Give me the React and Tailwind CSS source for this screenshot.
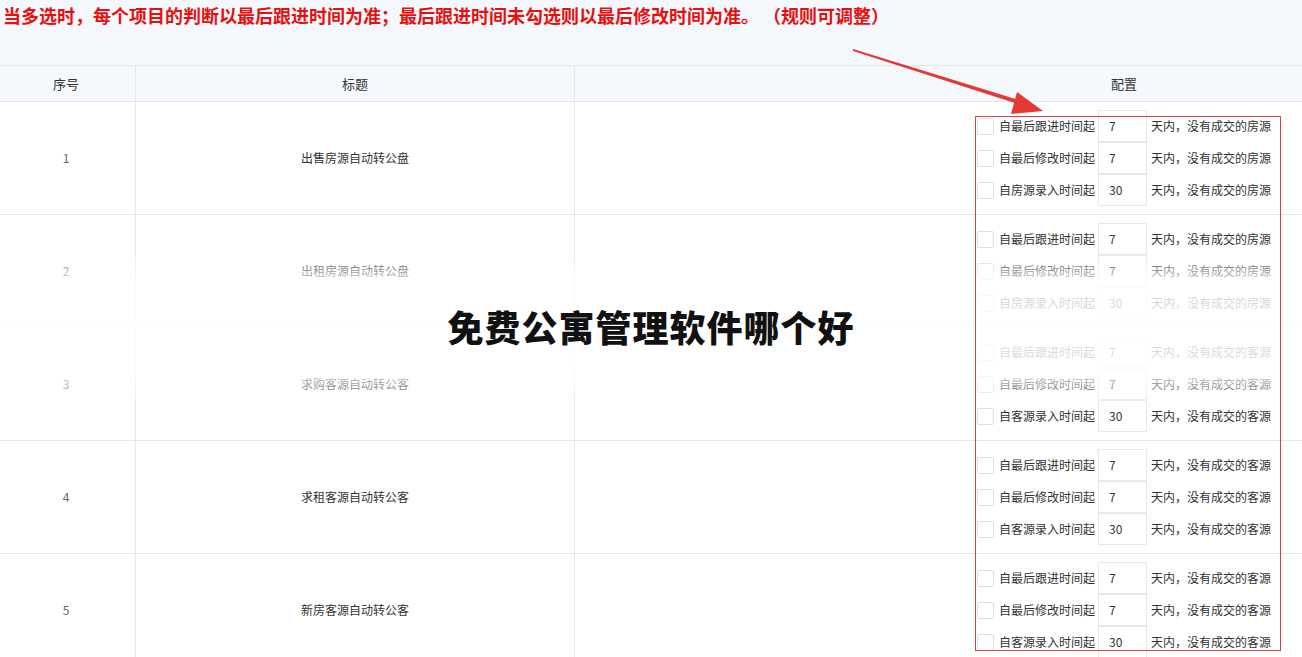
const rows = [
  { no: 1, title: "出售房源自动转公盘", kind: "房源" },
  { no: 2, title: "出租房源自动转公盘", kind: "房源" },
  { no: 3, title: "求购客源自动转公客", kind: "客源" },
  { no: 4, title: "求租客源自动转公客", kind: "客源" },
  { no: 5, title: "新房客源自动转公客", kind: "客源" },
];

function ConfigLine({ label, value, kind }) {
  return (
    <div className="flex items-center h-[32px]">
      <span className="w-[17px] h-[17px] border border-[#dcdfe6] rounded-[2px] bg-white shrink-0" />
      <span className="ml-[5px] text-[12px] text-[#333] whitespace-nowrap">{label}</span>
      <div className="ml-[3px] w-[49px] h-[32px] border border-[#e8e8e8] flex items-center pl-[10px] text-[12px] text-[#333]">
        {value}
      </div>
      <span className="ml-[4px] text-[12px] text-[#333] whitespace-nowrap">天内，没有成交的{kind}</span>
    </div>
  );
}

function Row({ row }) {
  return (
    <div className="flex h-[113px] border-b border-[#e6e8eb] bg-white">
      <div className="w-[136px] border-r border-[#e6e8eb] flex items-center justify-center pr-[3px] text-[12px] text-[#666]">
        {row.no}
      </div>
      <div className="w-[439px] border-r border-[#e6e8eb] flex items-center justify-center text-[12px] text-[#333]">
        {row.title}
      </div>
      <div className="flex-1 flex flex-col items-center justify-center">
        <ConfigLine label="自最后跟进时间起" value="7" kind={row.kind} />
        <ConfigLine label="自最后修改时间起" value="7" kind={row.kind} />
        <ConfigLine label={`自${row.kind}录入时间起`} value="30" kind={row.kind} />
      </div>
    </div>
  );
}

export default function App() {
  return (
    <div
      className="relative w-[1302px] h-[657px] overflow-hidden bg-white"
      style={{ fontFamily: '"Noto Sans CJK SC", "Noto Sans", sans-serif' }}
    >
      <div className="h-[65px] bg-[#f5f8fc] px-[3px] pt-[3px]">
        <p className="text-[18px] font-bold text-[#e8100f] leading-[24px] whitespace-nowrap">
          当多选时，每个项目的判断以最后跟进时间为准；最后跟进时间未勾选则以最后修改时间为准。 （规则可调整）
        </p>
      </div>
      <div className="w-[1673px]">
        <div className="flex h-[37px] bg-[#f5f8fc] border-y border-[#e3e6ea] text-[13px] text-[#333]">
          <div className="w-[136px] border-r border-[#e3e6ea] flex items-center justify-center pr-[3px]">序号</div>
          <div className="w-[439px] border-r border-[#e3e6ea] flex items-center justify-center">标题</div>
          <div className="flex-1 flex items-center justify-center">配置</div>
        </div>
        {rows.map((r) => (
          <Row key={r.no} row={r} />
        ))}
      </div>

      {/* fading band behind the watermark title */}
      <div className="absolute left-0 right-0 top-[252px] h-[155px] bg-[linear-gradient(to_bottom,rgba(255,255,255,0)_0%,rgba(255,255,255,0.75)_18%,rgba(255,255,255,0.85)_45%,rgba(255,255,255,0.8)_78%,rgba(255,255,255,0)_100%)] pointer-events-none" />
      <div className="absolute left-0 right-0 top-[302px] flex justify-center pointer-events-none">
        <span className="text-[36px] font-black text-[#111] leading-[48px] tracking-[1px]">免费公寓管理软件哪个好</span>
      </div>

      {/* annotation box */}
      <div className="absolute left-[975px] top-[116px] w-[306px] h-[535px] border border-[#d64545] pointer-events-none" />
      <svg className="absolute left-0 top-0 pointer-events-none" width="1302" height="657">
        <polygon points="853,49 1022,101 1021,105 853,51" fill="#e53935" />
        <polygon points="1043,111 1017,92 1011,114" fill="#e53935" />
      </svg>
    </div>
  );
}
